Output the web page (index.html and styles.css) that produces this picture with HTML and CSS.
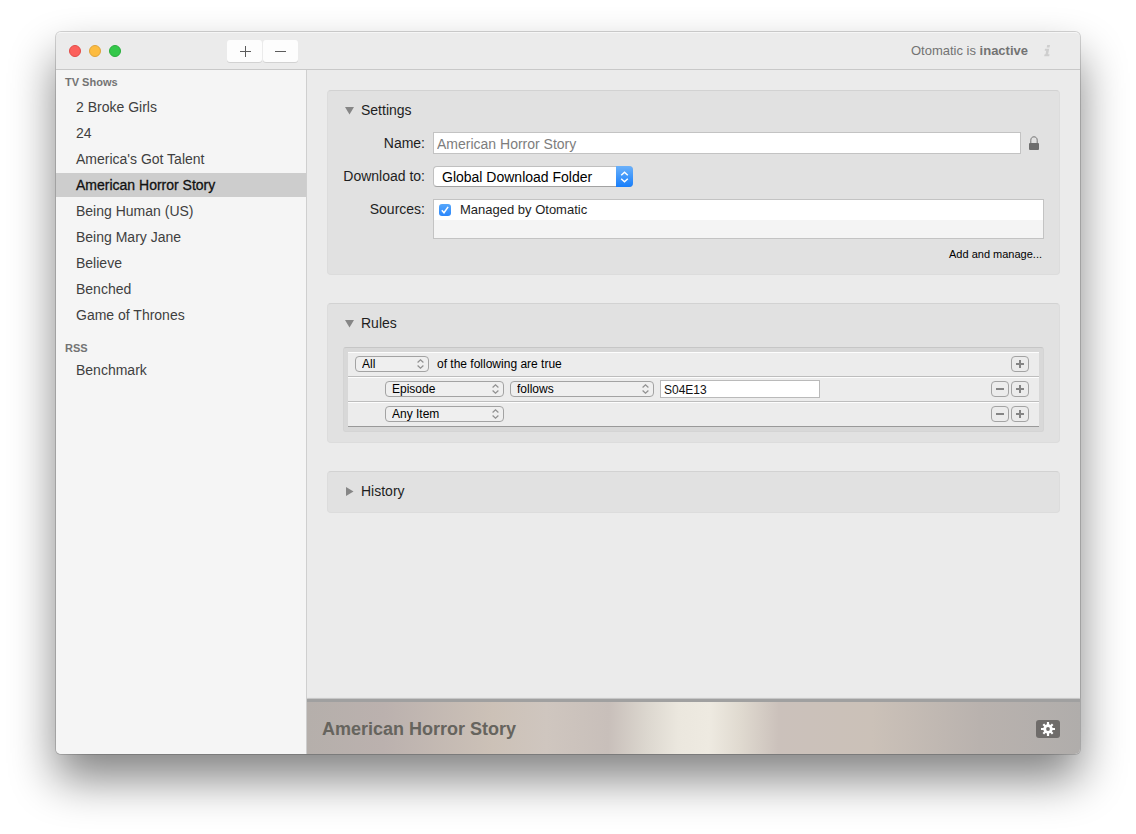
FILE: index.html
```html
<!DOCTYPE html>
<html lang="en">
<head>
<meta charset="utf-8">
<title>Otomatic</title>
<link rel="stylesheet" href="styles.css">
</head>
<body>
<div class="window">
  <header class="titlebar">
    <div class="lights">
      <button class="light light-close" aria-label="Close"></button>
      <button class="light light-min" aria-label="Minimize"></button>
      <button class="light light-zoom" aria-label="Zoom"></button>
    </div>
    <div class="tools">
      <button class="tool" aria-label="Add show"><svg width="13" height="12" viewBox="0 0 13 12"><path d="M2 6.500h11M7.500 1v11" stroke="#5c5c5c" fill="none"/></svg></button>
      <button class="tool" aria-label="Remove show"><svg width="13" height="12" viewBox="0 0 13 12"><path d="M1 6.500h11" stroke="#5c5c5c" fill="none"/></svg></button>
    </div>
    <p class="status">Otomatic is <strong>inactive</strong></p>
    <button class="info" aria-label="Info"><svg width="8" height="12" viewBox="0 0 8 12"><path d="M3.200 0h2.800l-.5 2.600H2.700zM1 3.800h4.200L4.100 9.200h1.400L5.200 11.200H.2l.4-2h.9L2.200 5.700H.7z" fill="#cecece"/></svg></button>
  </header>

  <div class="body">
    <nav class="sidebar">
      <h2 class="group group-first">TV Shows</h2>
      <ul class="list">
        <li><a class="item" href="#">2 Broke Girls</a></li>
        <li><a class="item" href="#">24</a></li>
        <li><a class="item" href="#">America's Got Talent</a></li>
        <li><a class="item item-selected" href="#" aria-current="page">American Horror Story</a></li>
        <li><a class="item" href="#">Being Human (US)</a></li>
        <li><a class="item" href="#">Being Mary Jane</a></li>
        <li><a class="item" href="#">Believe</a></li>
        <li><a class="item" href="#">Benched</a></li>
        <li><a class="item" href="#">Game of Thrones</a></li>
      </ul>
      <h2 class="group">RSS</h2>
      <ul class="list">
        <li><a class="item" href="#">Benchmark</a></li>
      </ul>
    </nav>

    <main class="main">
      <div class="panels">
        <section class="card">
          <h3 class="card-title"><button class="disclosure" aria-expanded="true"><svg class="triangle" width="10" height="10" viewBox="0 0 10 10"><path d="M0 1h9L4.500 8.500z"/></svg>Settings</button></h3>
          <div class="form">
            <label class="label" for="name">Name:</label>
            <div class="name-row">
              <input class="name" id="name" type="text" placeholder="American Horror Story">
              <svg class="lock" width="10" height="15" viewBox="0 0 10 15"><path d="M1.800 8V4.200C1.800 2 3.200.8 5 .8s3.200 1.200 3.200 3.400V8" fill="none" stroke="#737373"/><rect y="7" width="10" height="7" rx="1" fill="#6e6e6e"/></svg>
            </div>
            <label class="label" for="folder">Download to:</label>
            <div class="popup">
              <select class="popup-select" id="folder"><option>Global Download Folder</option></select>
              <span class="popup-cap"><svg width="9" height="12" viewBox="0 0 9 12"><path d="M1.200 4.200l3.300-3 3.300 3M1.200 7.800l3.300 3 3.300-3" fill="none" stroke="#fff" stroke-width="1.500"/></svg></span>
            </div>
            <span class="label label-sources">Sources:</span>
            <div class="sources">
              <label class="source"><input class="check" type="checkbox" checked><svg class="tick" width="8" height="8" viewBox="0 0 8 8"><path d="M.8 4.300l2.200 2.500L7.100.9" fill="none" stroke="#fff" stroke-width="1.500"/></svg>Managed by Otomatic</label>
            </div>
          </div>
          <a class="manage" href="#">Add and manage...</a>
        </section>

        <section class="card">
          <h3 class="card-title"><button class="disclosure" aria-expanded="true"><svg class="triangle" width="10" height="10" viewBox="0 0 10 10"><path d="M0 1h9L4.500 8.500z"/></svg>Rules</button></h3>
          <div class="rules">
            <div class="rule">
              <span class="mini mini-short"><select class="mini-select" aria-label="Match"><option>All</option></select><svg class="arrows" width="7" height="10" viewBox="0 0 7 10"><path d="M.6 3.500l2.900-2.700 2.900 2.700M.6 6.500l2.900 2.700 2.900-2.700"/></svg></span>
              <span class="rule-text">of the following are true</span>
              <span class="rule-actions">
                <button class="step" aria-label="Add rule"><svg width="8" height="8" viewBox="0 0 8 8"><path d="M0 4h8M4 0v8"/></svg></button>
              </span>
            </div>
            <div class="rule rule-nested">
              <span class="mini mini-field"><select class="mini-select" aria-label="Field"><option>Episode</option></select><svg class="arrows" width="7" height="10" viewBox="0 0 7 10"><path d="M.6 3.500l2.900-2.700 2.900 2.700M.6 6.500l2.900 2.700 2.900-2.700"/></svg></span>
              <span class="mini mini-long"><select class="mini-select" aria-label="Comparison"><option>follows</option></select><svg class="arrows" width="7" height="10" viewBox="0 0 7 10"><path d="M.6 3.500l2.900-2.700 2.900 2.700M.6 6.500l2.900 2.700 2.900-2.700"/></svg></span>
              <input class="rule-value" type="text" value="S04E13" aria-label="Episode value">
              <span class="rule-actions">
                <button class="step" aria-label="Remove rule"><svg width="8" height="8" viewBox="0 0 8 8"><path d="M0 4h8"/></svg></button>
                <button class="step" aria-label="Add rule"><svg width="8" height="8" viewBox="0 0 8 8"><path d="M0 4h8M4 0v8"/></svg></button>
              </span>
            </div>
            <div class="rule rule-nested">
              <span class="mini mini-field"><select class="mini-select" aria-label="Field"><option>Any Item</option></select><svg class="arrows" width="7" height="10" viewBox="0 0 7 10"><path d="M.6 3.500l2.900-2.700 2.900 2.700M.6 6.500l2.900 2.700 2.900-2.700"/></svg></span>
              <span class="rule-actions">
                <button class="step" aria-label="Remove rule"><svg width="8" height="8" viewBox="0 0 8 8"><path d="M0 4h8"/></svg></button>
                <button class="step" aria-label="Add rule"><svg width="8" height="8" viewBox="0 0 8 8"><path d="M0 4h8M4 0v8"/></svg></button>
              </span>
            </div>
          </div>
        </section>

        <section class="card">
          <h3 class="card-title"><button class="disclosure" aria-expanded="false"><svg class="triangle" width="10" height="10" viewBox="0 0 10 10"><path d="M1 0v9L8.500 4.500z"/></svg>History</button></h3>
        </section>
      </div>

      <footer class="banner">
        <h1 class="banner-title">American Horror Story</h1>
        <button class="gear" aria-label="Actions"><svg width="14" height="14" viewBox="-7 -7 14 14"><g stroke="#fff" stroke-width="2.200"><path d="M0-7V7M-7 0H7M-4.700-4.700L4.700 4.700M-4.700 4.700L4.700-4.700"/></g><circle r="4.700" fill="#fff"/><circle r="1.900" fill="#6f6c6a"/></svg></button>
      </footer>
    </main>
  </div>
</div>
</body>
</html>
```
FILE: styles.css
```css
* {
  box-sizing: border-box;
}

body {
  display: flex;
  min-height: 100vh;
  margin: 0;
  padding: 32px 56px 80px;
  background: #fff;
  color: #1e1e1e;
  font: 14px/20px "Liberation Sans", Arial, sans-serif;
}

h1, h2, h3, p, ul {
  margin: 0;
  padding: 0;
}

button, input, select {
  margin: 0;
  padding: 0;
  border: 0;
  color: inherit;
  font: inherit;
  appearance: none;
}

button {
  display: flex;
  align-items: center;
  justify-content: center;
  background: none;
}

a {
  color: inherit;
  text-decoration: none;
}

svg {
  display: block;
  flex: none;
}

.window {
  display: flex;
  flex: 1;
  flex-direction: column;
  min-width: 0;
  border-radius: 5px;
  background: #ebebeb;
  box-shadow: 0 0 0 1px rgba(0, 0, 0, 0.16), 0 25px 46px rgba(0, 0, 0, 0.49);
}

.titlebar {
  display: flex;
  align-items: center;
  height: 38px;
  padding: 0 28px 0 13px;
  border-top: 1px solid #f6f6f6;
  border-bottom: 1px solid #c8c8c8;
  border-radius: 5px 5px 0 0;
}

.lights {
  display: flex;
  gap: 8px;
}

.light {
  width: 12px;
  height: 12px;
  border: 1px solid;
  border-radius: 50%;
}

.light-close {
  border-color: #e24b47;
  background: #fc605c;
}

.light-min {
  border-color: #dfa43a;
  background: #fdbc40;
}

.light-zoom {
  border-color: #29ae3c;
  background: #34c84a;
}

.tools {
  display: flex;
  gap: 1px;
  margin-left: 106px;
}

.tool {
  width: 35px;
  height: 22px;
  border-radius: 3px;
  background: #fdfdfd;
  box-shadow: 0 1px 0 #d2d2d2;
}

.status {
  margin-left: auto;
  color: #737373;
  font-size: 13px;
}

.info {
  width: 8px;
  margin-left: 16px;
}

.body {
  display: flex;
  flex: 1;
}

.sidebar {
  flex: none;
  width: 251px;
  padding-top: 3px;
  border-right: 1px solid #cfcfcf;
  border-radius: 0 0 0 5px;
  background: #f5f5f5;
}

.group {
  padding: 0 9px 1px;
  color: #737373;
  font-size: 11px;
  line-height: 18px;
}

.group-first {
  padding-bottom: 4px;
}

.list {
  display: grid;
  gap: 2px;
  padding-bottom: 12px;
  list-style: none;
}

.item {
  display: block;
  padding: 0 20px;
  color: #3f3f3f;
  line-height: 24px;
}

.item-selected {
  background: #cdcdcd;
  color: #111;
  -webkit-text-stroke: 0.3px;
}

.main {
  display: flex;
  flex: 1;
  flex-direction: column;
  min-width: 0;
}

.panels {
  display: flex;
  flex: 1;
  flex-direction: column;
  gap: 28px;
  padding: 20px;
}

.card {
  padding: 9px 15px 10px;
  border: 1px solid #dcdcdc;
  border-top-color: #d2d2d2;
  border-radius: 4px;
  background: #e1e1e1;
}

.card-title {
  font-weight: 400;
}

.disclosure {
  gap: 6px;
  padding-left: 2px;
  font-size: 14px;
  line-height: 21px;
}

.triangle {
  fill: #868686;
}

.form {
  display: grid;
  grid-template-columns: 82px 1fr;
  gap: 12px 8px;
  padding-top: 11px;
}

.label {
  align-self: center;
  line-height: 21px;
  text-align: right;
  white-space: nowrap;
}

.label-sources {
  align-self: start;
}

.name-row {
  display: flex;
  align-items: center;
  gap: 8px;
  padding-right: 5px;
}

.name {
  flex: 1;
  min-width: 0;
  height: 22px;
  padding: 2px 3px 0;
  border: 1px solid #c3c3c3;
  background: #fff;
}

.name::placeholder {
  color: #7d7d7d;
}

.popup {
  display: flex;
  position: relative;
  width: 200px;
  height: 21px;
  border-radius: 4px;
}

.popup-select {
  width: 100%;
  padding: 0 24px 0 8px;
  border: 1px solid #c0c0c0;
  border-bottom-color: #a2a2a2;
  border-radius: 4px;
  background: #fff;
  color: #000;
}

.popup-cap {
  display: flex;
  position: absolute;
  top: 0;
  right: 0;
  bottom: 0;
  align-items: center;
  justify-content: center;
  width: 17px;
  border-radius: 0 4px 4px 0;
  background: linear-gradient(#6bb1fa, #177efb);
  pointer-events: none;
}

.sources {
  height: 40px;
  border: 1px solid #c3c3c3;
  background: #f4f4f4;
}

.source {
  display: flex;
  position: relative;
  align-items: center;
  gap: 9px;
  padding-left: 5px;
  background: #fff;
  font-size: 13px;
}

.check {
  width: 12px;
  height: 12px;
  border-radius: 3px;
  background: linear-gradient(#56a7fb, #2a86fb);
}

.tick {
  position: absolute;
  top: 6px;
  left: 7px;
}

.check:not(:checked) + .tick {
  display: none;
}

.manage {
  display: block;
  padding: 7px 2px 2px;
  color: #000;
  font-size: 11px;
  line-height: 16px;
  text-align: right;
}

.rules {
  margin-top: 13px;
  padding: 4px;
  border: 1px solid #d4d4d4;
  border-top-color: #c6c6c6;
  border-radius: 3px;
  background: #d8d8d8;
  color: #000;
  font-size: 12px;
}

.rule {
  display: flex;
  align-items: center;
  gap: 6px;
  height: 25px;
  padding: 0 10px 1px 7px;
  border-top: 1px solid #fdfdfd;
  border-bottom: 1px solid #bdbdbd;
  background: #ececec;
}

.rule:last-child {
  border-bottom-color: #999;
}

.rule-nested {
  padding-left: 37px;
}

.mini {
  display: flex;
  position: relative;
  height: 16px;
}

.mini-short {
  width: 74px;
}

.mini-field {
  width: 119px;
}

.mini-long {
  width: 144px;
}

.mini-select {
  width: 100%;
  padding: 0 16px 0 6px;
  border: 1px solid #a3a3a3;
  border-radius: 4px;
  background: #efefef;
  line-height: 14px;
}

.arrows {
  position: absolute;
  top: 3px;
  right: 5px;
  fill: none;
  stroke: #909090;
  stroke-width: 1.2;
  pointer-events: none;
}

.rule-text {
  padding-left: 2px;
}

.rule-value {
  width: 160px;
  height: 18px;
  padding: 2px 3px 0;
  border: 1px solid #bababa;
  background: #fff;
  color: #111;
}

.rule-actions {
  display: flex;
  gap: 2px;
  margin-left: auto;
}

.step {
  width: 18px;
  height: 16px;
  border: 1px solid #a3a3a3;
  border-radius: 4px;
  stroke: #858585;
  stroke-width: 2px;
}

.banner {
  display: flex;
  align-items: center;
  justify-content: space-between;
  height: 55px;
  padding: 2px 20px 0 15px;
  border-top: 3px solid #a0a0a0;
  border-radius: 0 0 5px 0;
  background: linear-gradient(91deg, #b5afab 0%, #bbb1ae 10%, #ccc1b7 24%, #cfc6bf 31%, #c8bfba 39%, #dcd7cf 44%, #ebe7de 48%, #eeeae1 52%, #e0dad0 56%, #cbc1bb 61%, #cbc1b8 73%, #b9b2ae 87%, #b0adab 100%);
  box-shadow: 0 -1px 1px #c4c4c4;
}

.banner-title {
  color: #66645e;
  font-size: 18px;
  line-height: 24px;
}

.gear {
  width: 24px;
  height: 18px;
  border-radius: 3px;
  background: #6f6c6a;
}
```
